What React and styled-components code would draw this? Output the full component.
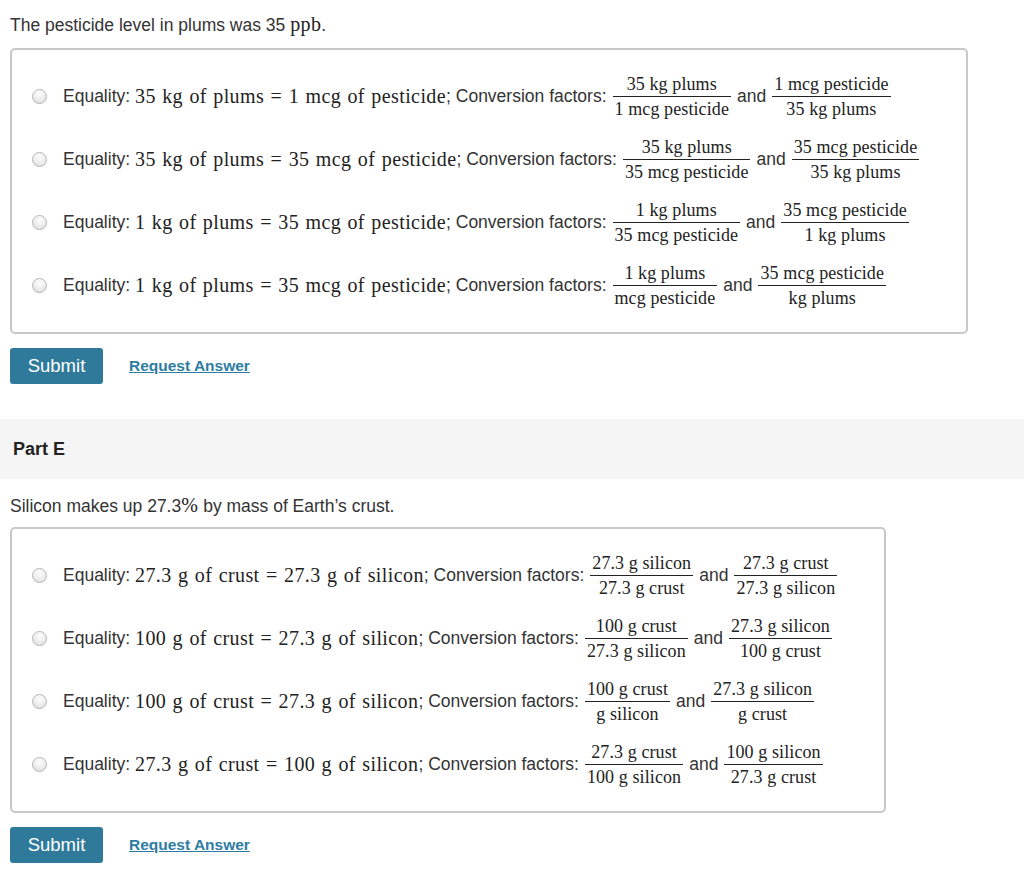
import React from "react";
import styled, { createGlobalStyle } from "styled-components";

const GlobalStyle = createGlobalStyle`
  body {
    margin: 0;
    background: #fff;
    font-family: "Liberation Sans", Arial, sans-serif;
    color: #333;
  }
`;

const Page = styled.div`
  padding: 14px 10px 10px;
  width: 1024px;
  box-sizing: border-box;
`;

const Prompt = styled.p`
  margin: 0;
  font-size: 17.5px;
  line-height: 20px;
`;

const MathText = styled.span`
  font-family: "Liberation Serif", "Times New Roman", serif;
  font-size: 20px;
  letter-spacing: 0.4px;
  word-spacing: 1px;
  color: #222;
`;

const ChoiceBox = styled.div`
  display: inline-flex;
  flex-direction: column;
  gap: 16px;
  margin-top: ${({ $top }) => $top}px;
  padding: 23px 41px 23px 20px;
  border: 2px solid #c8c8c8;
  border-radius: 5px;
`;

const Row = styled.label`
  display: flex;
  align-items: center;
  height: 47px;
  font-size: 17.5px;
  white-space: nowrap;
`;

const Radio = styled.span`
  width: 13px;
  height: 13px;
  border-radius: 50%;
  border: 1px solid #b5b5b5;
  background: radial-gradient(circle at 50% 35%, #fdfdfd 0%, #e6e6e6 70%, #d4d4d4 100%);
  box-shadow: inset 0 1px 1px rgba(255, 255, 255, 0.8);
  margin-right: 16px;
  flex-shrink: 0;
`;

const Frac = styled.span`
  display: inline-flex;
  flex-direction: column;
  align-items: center;
  font-family: "Liberation Serif", "Times New Roman", serif;
  font-size: 18px;
  letter-spacing: 0.1px;
  color: #222;
  margin: 0 6px;
  line-height: 22px;
`;

const Num = styled.span`
  padding: 0 2px 1px;
  border-bottom: 1px solid #222;
  align-self: stretch;
  text-align: center;
`;

const Den = styled.span`
  padding: 1px 2px 0;
`;

const Actions = styled.div`
  display: flex;
  align-items: center;
  gap: 26px;
  margin-top: 14px;
`;

const SubmitButton = styled.button`
  width: 93px;
  height: 36px;
  border: none;
  border-radius: 3px;
  background: #2f7a9b;
  color: #fff;
  font-family: "Liberation Sans", Arial, sans-serif;
  font-size: 18.5px;
  cursor: pointer;
`;

const RequestLink = styled.a`
  color: #2e7ca2;
  font-weight: bold;
  font-size: 15.5px;
  text-decoration: underline;
  cursor: pointer;
`;

const PartHeader = styled.div`
  margin: 35px -10px 0;
  height: 60px;
  display: flex;
  align-items: center;
  padding-left: 13px;
  background: #f5f5f5;
  font-weight: bold;
  font-size: 18px;
  color: #222;
`;

const SecondPrompt = styled(Prompt)`
  margin-top: 16px;
`;

const Fraction = ({ top, bottom }) => (
  <Frac>
    <Num>{top}</Num>
    <Den>{bottom}</Den>
  </Frac>
);

const Choice = ({ left, right, f1, f2 }) => (
  <Row>
    <Radio />
    Equality:&nbsp;
    <MathText>
      {left} = {right}
    </MathText>
    ; Conversion factors:
    <Fraction top={f1[0]} bottom={f1[1]} />
    and
    <Fraction top={f2[0]} bottom={f2[1]} />
  </Row>
);

const partD = [
  { left: "35 kg of plums", right: "1 mcg of pesticide", f1: ["35 kg plums", "1 mcg pesticide"], f2: ["1 mcg pesticide", "35 kg plums"] },
  { left: "35 kg of plums", right: "35 mcg of pesticide", f1: ["35 kg plums", "35 mcg pesticide"], f2: ["35 mcg pesticide", "35 kg plums"] },
  { left: "1 kg of plums", right: "35 mcg of pesticide", f1: ["1 kg plums", "35 mcg pesticide"], f2: ["35 mcg pesticide", "1 kg plums"] },
  { left: "1 kg of plums", right: "35 mcg of pesticide", f1: ["1 kg plums", "mcg pesticide"], f2: ["35 mcg pesticide", "kg plums"] },
];

const partE = [
  { left: "27.3 g of crust", right: "27.3 g of silicon", f1: ["27.3 g silicon", "27.3 g crust"], f2: ["27.3 g crust", "27.3 g silicon"] },
  { left: "100 g of crust", right: "27.3 g of silicon", f1: ["100 g crust", "27.3 g silicon"], f2: ["27.3 g silicon", "100 g crust"] },
  { left: "100 g of crust", right: "27.3 g of silicon", f1: ["100 g crust", "g silicon"], f2: ["27.3 g silicon", "g crust"] },
  { left: "27.3 g of crust", right: "100 g of silicon", f1: ["27.3 g crust", "100 g silicon"], f2: ["100 g silicon", "27.3 g crust"] },
];

const App = () => (
  <Page>
    <GlobalStyle />
    <Prompt>
      The pesticide level in plums was 35 <MathText>ppb</MathText>.
    </Prompt>
    <ChoiceBox $top={13}>
      {partD.map((c, i) => (
        <Choice key={i} {...c} />
      ))}
    </ChoiceBox>
    <Actions>
      <SubmitButton>Submit</SubmitButton>
      <RequestLink>Request Answer</RequestLink>
    </Actions>
    <PartHeader>Part E</PartHeader>
    <SecondPrompt>
      Silicon makes up 27.3<MathText>%</MathText> by mass of Earth’s crust.
    </SecondPrompt>
    <ChoiceBox $top={11}>
      {partE.map((c, i) => (
        <Choice key={i} {...c} />
      ))}
    </ChoiceBox>
    <Actions>
      <SubmitButton>Submit</SubmitButton>
      <RequestLink>Request Answer</RequestLink>
    </Actions>
  </Page>
);

export default App;
